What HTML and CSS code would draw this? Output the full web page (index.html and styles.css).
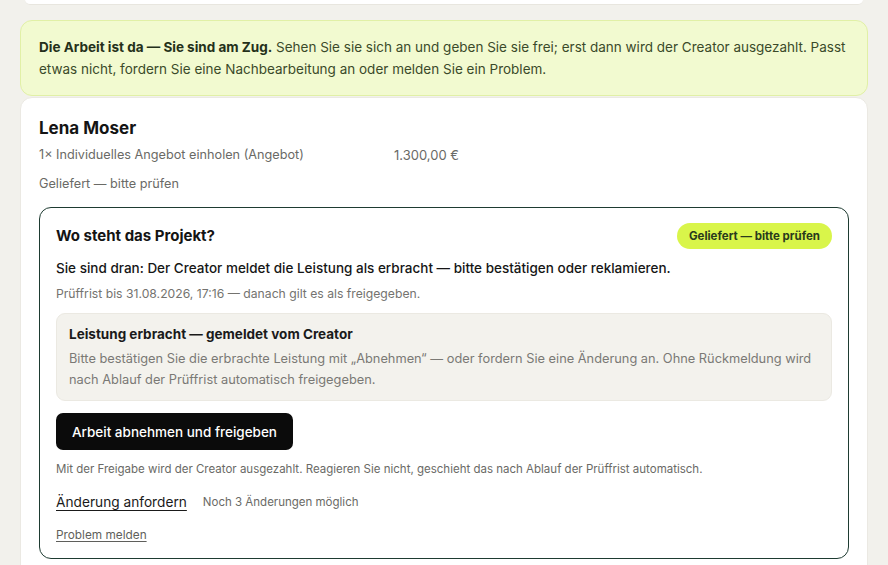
FILE: index.html
```html
<!DOCTYPE html>
<html lang="de">
<head>
<meta charset="utf-8">
<title>Projekt</title>
<link rel="stylesheet" href="styles.css">
</head>
<body>
<div class="page">
  <div class="prev-card"></div>
  <div class="banner">
    <strong>Die Arbeit ist da — Sie sind am Zug.</strong> Sehen Sie sie sich an und geben Sie sie frei; erst dann wird der Creator ausgezahlt. Passt etwas nicht, fordern Sie eine Nachbearbeitung an oder melden Sie ein Problem.
  </div>
  <div class="card">
    <h2 class="name">Lena Moser</h2>
    <div class="item">
      <span>1× Individuelles Angebot einholen (Angebot)</span>
      <span>1.300,00 €</span>
    </div>
    <div class="status">Geliefert — bitte prüfen</div>

    <section class="project">
      <div class="project-head">
        <h3>Wo steht das Projekt?</h3>
        <span class="pill">Geliefert — bitte prüfen</span>
      </div>
      <p class="lead">Sie sind dran: Der Creator meldet die Leistung als erbracht — bitte bestätigen oder reklamieren.</p>
      <p class="deadline">Prüffrist bis 31.08.2026, 17:16 — danach gilt es als freigegeben.</p>
      <div class="note">
        <div class="note-title">Leistung erbracht — gemeldet vom Creator</div>
        <p>Bitte bestätigen Sie die erbrachte Leistung mit „Abnehmen“ — oder fordern Sie eine Änderung an. Ohne Rückmeldung wird nach Ablauf der Prüffrist automatisch freigegeben.</p>
      </div>
      <button class="primary">Arbeit abnehmen und freigeben</button>
      <p class="hint">Mit der Freigabe wird der Creator ausgezahlt. Reagieren Sie nicht, geschieht das nach Ablauf der Prüffrist automatisch.</p>
      <div class="change-row">
        <a class="change-link" href="#">Änderung anfordern</a>
        <span class="change-count">Noch 3 Änderungen möglich</span>
      </div>
      <a class="problem-link" href="#">Problem melden</a>
    </section>
  </div>
</div>
</body>
</html>
```

FILE: styles.css
```css
* { box-sizing: border-box; }
html, body {
  margin: 0;
  padding: 0;
  background: #f2f1ec;
  font-family: Inter, "Noto Sans", "Liberation Sans", sans-serif;
  color: #1a1a1a;
}
.page {
  padding: 0 20px;
  width: 888px;
  height: 565px;
  overflow: hidden;
}
.prev-card {
  height: 5px;
  margin: 0 5px 15px;
  background: #fff;
  border-bottom: 1px solid #e8e6df;
  border-radius: 0 0 10px 10px;
}
.banner {
  background: #f2fad0;
  border: 1px solid #e1f0a6;
  border-radius: 12px;
  padding: 15px 18px 15px;
  font-size: 13.5px;
  line-height: 22px;
  color: #3b4a2a;
}
.banner strong {
  color: #24301a;
  font-weight: 700;
}
.card {
  margin-top: 1px;
  background: #fff;
  border: 1px solid #ebe9e3;
  border-radius: 12px;
  padding: 18px 18px 20px;
}
.name {
  margin: 0;
  font-size: 17px;
  line-height: 24px;
  font-weight: 700;
  color: #141414;
}
.item {
  margin-top: 5px;
  display: grid;
  grid-template-columns: 355px auto;
  justify-content: start;
  font-size: 12.7px;
  line-height: 20px;
  color: #6a6a66;
}
.item span:last-child {
  font-size: 13px;
}
.status {
  margin-top: 9px;
  font-size: 12.7px;
  line-height: 20px;
  color: #6a6a66;
}
.project {
  margin-top: 13px;
  border: 1px solid #1e3b31;
  border-radius: 12px;
  padding: 15px 16px 14px;
}
.project-head {
  display: flex;
  align-items: center;
  justify-content: space-between;
}
.project-head h3 {
  margin: 0;
  font-size: 15px;
  line-height: 22px;
  font-weight: 700;
  color: #141414;
}
.pill {
  display: inline-flex;
  align-items: center;
  height: 26px;
  padding: 0 12px;
  border-radius: 13px;
  background: #d9f54a;
  color: #2a3a1c;
  font-size: 11.5px;
  font-weight: 700;
}
.lead {
  margin: 9px 0 0;
  font-size: 13.5px;
  line-height: 20px;
  font-weight: 500;
  color: #161616;
}
.deadline {
  margin: 6px 0 0;
  font-size: 12.2px;
  line-height: 20px;
  color: #74736f;
}
.note {
  margin-top: 9px;
  background: #f3f2ed;
  border: 1px solid #ebe9e2;
  border-radius: 9px;
  padding: 10px 12px 10px;
}
.note-title {
  font-size: 13.5px;
  line-height: 20px;
  font-weight: 700;
  color: #1a1a1a;
}
.note p {
  margin: 4px 0 0;
  font-size: 12.8px;
  line-height: 21px;
  color: #7a7975;
}
.primary {
  display: block;
  margin-top: 12px;
  height: 37px;
  padding: 0 16px;
  border: 0;
  border-radius: 7px;
  background: #0b0b0b;
  color: #fff;
  font-family: inherit;
  font-size: 13.5px;
  font-weight: 500;
}
.hint {
  margin: 10px 0 0;
  font-size: 11.5px;
  line-height: 18px;
  color: #6a6a66;
}
.change-row {
  margin-top: 12px;
  display: flex;
  align-items: center;
  gap: 16px;
  height: 24px;
}
.change-link {
  font-size: 13.7px;
  color: #1a1a1a;
  text-decoration: underline;
  text-underline-offset: 3px;
}
.change-count {
  font-size: 11.5px;
  color: #6a6a66;
}
.problem-link {
  display: inline-block;
  margin-top: 12px;
  font-size: 11.8px;
  line-height: 18px;
  color: #5f5f5b;
  text-decoration: underline;
  text-underline-offset: 2px;
}
```
